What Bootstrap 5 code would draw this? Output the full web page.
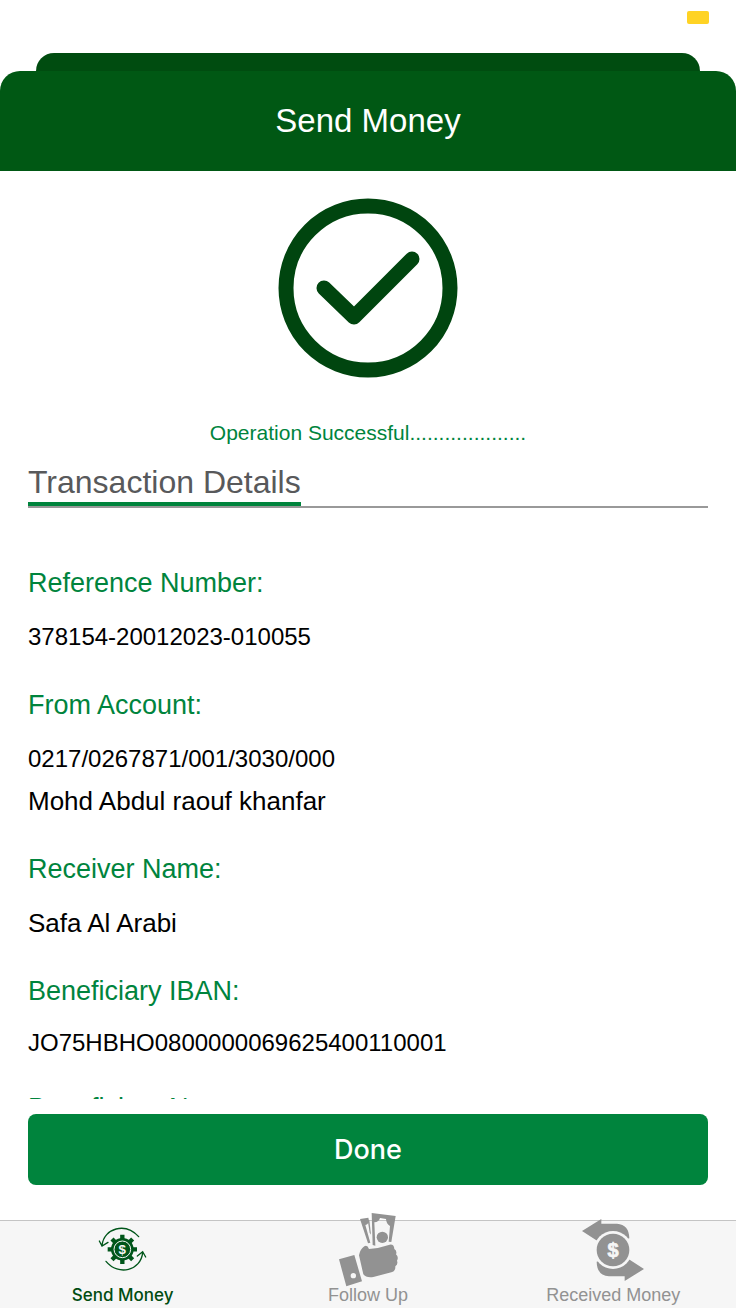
<!DOCTYPE html>
<html lang="en">
<head>
<meta charset="utf-8">
<meta name="viewport" content="width=device-width, initial-scale=1">
<title>Send Money</title>
<link rel="stylesheet" href="https://cdn.jsdelivr.net/npm/bootstrap@5.3.0/dist/css/bootstrap.min.css">
<style>
  body { font-family: "Liberation Sans", Arial, sans-serif; color: #000; background: #fff; }
  .status-strip { height: 53px; padding: 11px 27px; }
  .battery { width: 22px; height: 13px; border-radius: 2px; background: #ffd324; }
  .sheet-behind { height: 18px; margin: 0 36px; border-radius: 18px 18px 0 0; background: #004c10; }
  .sheet-head { height: 100px; border-radius: 20px 20px 0 0; background: #005814; color: #fff; }
  .sheet-head h1 { font-size: 33px; line-height: 40px; }
  .page-pad { padding-left: 28px; padding-right: 28px; }
  .scroll-area { min-height: 0; }
  .check-mark { width: 180px; height: 180px; margin-top: 27px; }
  .result { margin-top: 41px; font-size: 21px; line-height: 28px; color: #00843d; }
  .section-title { margin-top: 15px; border-bottom: 2px solid #999; }
  .section-title h2 { font-size: 32px; line-height: 40px; border-bottom: 4px solid #00843d; color: #58595b; }
  .details { margin-top: 58px; }
  .details dt { font-size: 27px; line-height: 34px; font-weight: 400; color: #00843d; margin-bottom: 16px; }
  .details dd { font-size: 24px; line-height: 42px; margin-bottom: 30px; }
  .details .person { font-size: 26px; }
  .details .iban { line-height: 38px; margin-bottom: 29px; }
  .btn-done { height: 71px; border-radius: 8px; background: #00843d; color: #fff; font: 500 27px/34px Inter, sans-serif; }
  .btn-done:hover { background: #00733a; color: #fff; }
  .done-row { padding-top: 15px; padding-bottom: 35px; }
  .tabs { height: 88px; border-top: 1px solid #c4c4c4; background: #f6f6f6; }
  .tabs a { font-size: 18px; line-height: 22px; padding-bottom: 2px; color: #929292; text-decoration: none; }
  .tabs a.active { color: #004c10; font-family: Inter, sans-serif; font-size: 17px; font-weight: 500; }
  .tabs svg { width: 70px; height: 76px; flex-shrink: 0; margin-bottom: -4px; }
  .tabs text { font-family: "Liberation Sans", Arial, sans-serif; font-weight: 700; text-anchor: middle; fill: #f6f6f6; }
</style>
</head>
<body>
<div class="vh-100 d-flex flex-column overflow-hidden">
  <div class="status-strip d-flex justify-content-end flex-shrink-0"><div class="battery"></div></div>
  <div class="sheet-behind flex-shrink-0"></div>
  <header class="sheet-head d-flex align-items-center justify-content-center flex-shrink-0">
    <h1 class="m-0 fw-normal">Send Money</h1>
  </header>
  <main class="scroll-area page-pad flex-fill overflow-hidden">
    <div class="text-center">
      <svg class="check-mark d-block mx-auto" viewBox="0 0 180 180" fill="none" stroke="#00450f" aria-hidden="true">
        <circle cx="90" cy="90" r="82" stroke-width="15"/>
        <path d="M46 90l30 29 58-58" stroke-width="15" stroke-linecap="round" stroke-linejoin="round"/>
      </svg>
      <p class="result mb-0">Operation Successful....................</p>
    </div>
    <div class="section-title d-flex"><h2 class="m-0 fw-normal">Transaction Details</h2></div>
    <dl class="details mb-0">
      <dt>Reference Number:</dt><dd>378154-20012023-010055</dd>
      <dt>From Account:</dt><dd>0217/0267871/001/3030/000<div class="person">Mohd Abdul raouf khanfar</div></dd>
      <dt>Receiver Name:</dt><dd class="person">Safa Al Arabi</dd>
      <dt>Beneficiary IBAN:</dt><dd class="iban">JO75HBHO0800000069625400110001</dd>
      <dt>Beneficiary Name:</dt>
    </dl>
  </main>
  <div class="done-row page-pad flex-shrink-0"><button type="button" class="btn btn-done w-100 border-0">Done</button></div>
  <nav class="tabs d-flex flex-shrink-0" aria-label="Transfers">
    <a href="#send" class="active col-4 d-flex flex-column align-items-center justify-content-end" aria-current="page">
      <svg viewBox="83 36 210 228" fill="none" stroke="#00561a" aria-hidden="true">
        <path stroke-width="4" stroke-linecap="round" d="M125 136C131 84 195 66 235 110M117 123L125 138L143 127M137 184C175 230 242 211 247 158M231 168L247 155L256 171"/>
        <path stroke-width="13" d="M186 104V192M142 148H230M155 117L217 179M155 179L217 117"/>
        <circle cx="186" cy="148" r="34" fill="#00561a" stroke="none"/>
        <circle cx="186" cy="148" r="25" stroke="#f6f6f6" stroke-width="3"/>
        <text x="186" y="162" font-size="40" stroke="none">$</text>
      </svg>
      <span>Send Money</span></a>
    <a href="#follow" class="col-4 d-flex flex-column align-items-center justify-content-end">
      <svg viewBox="69 36 210 228" fill="#929292" aria-hidden="true">
        <path fill-rule="evenodd" d="M87 178L133 165L156 244L109 259ZM138 227a8 8 0 1 0-16 0a8 8 0 1 0 16 0Z"/>
        <path d="M147 166Q150 148 163 139Q172 134 177 147Q210 144 239 134Q252 132 253 147Q262 153 258 163Q267 172 261 182Q265 193 256 199Q257 214 244 217L190 231Q168 234 160 223Z"/>
        <path d="M185 39L257 48L244 126L236 125L240 78Q229 72 228 57L210 54Q207 66 193 67L196 137L188 135Z"/>
        <path d="M150 57L175 53L177 62Q176 72 166 75L181 128L174 130Z"/>
        <path d="M173 60L178 60L183 104L179 98Z"/>
        <circle cx="217" cy="112" r="17"/>
      </svg>
      <span>Follow Up</span></a>
    <a href="#received" class="col-4 d-flex flex-column align-items-center justify-content-end">
      <svg viewBox="145 36 210 228" fill="#929292" aria-hidden="true">
        <path d="M157 93L215 57V71H262Q298 73 299 115L250 130L200 121Z"/>
        <path d="M343 207L285 243V229H238Q202 227 201 185L250 170L300 179Z"/>
        <circle cx="250" cy="150" r="57" fill="#f6f6f6"/>
        <circle cx="250" cy="150" r="49"/>
        <text x="250" y="171" font-size="60" stroke="#f6f6f6" stroke-width="2">$</text>
      </svg>
      <span>Received Money</span></a>
  </nav>
</div>
<script src="https://cdn.jsdelivr.net/npm/bootstrap@5.3.0/dist/js/bootstrap.bundle.min.js"></script>
</body>
</html>
